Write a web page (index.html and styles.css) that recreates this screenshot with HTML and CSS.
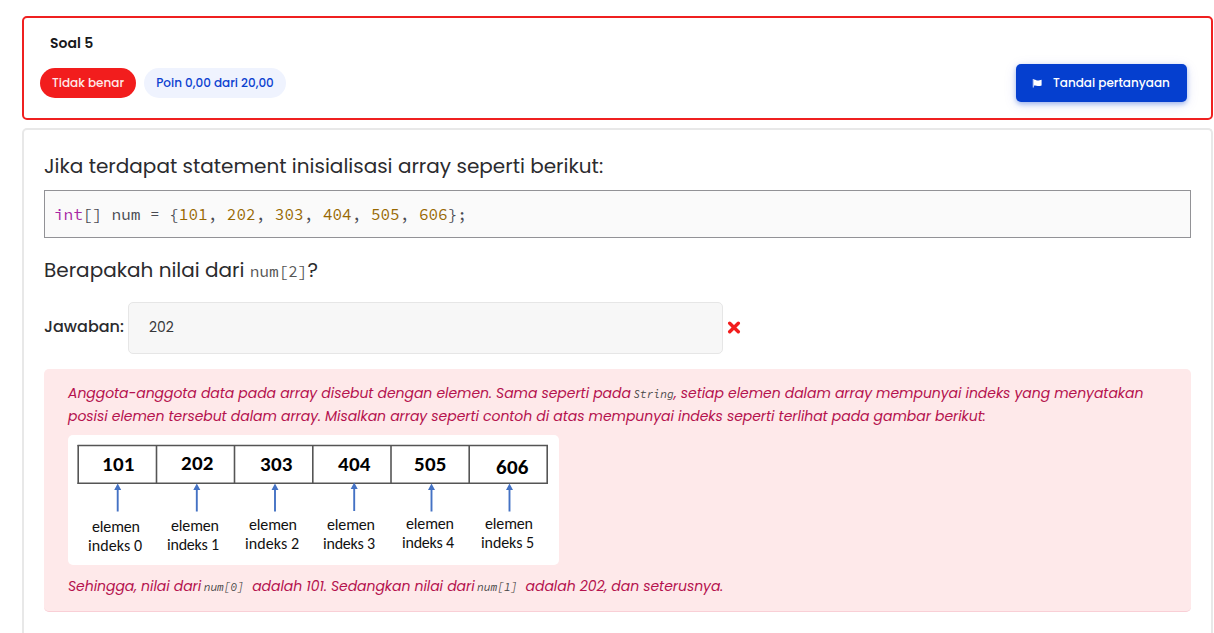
FILE: index.html
```html
<!DOCTYPE html>
<html lang="id">
<head>
<meta charset="utf-8">
<title>Soal 5</title>
<link rel="stylesheet" href="styles.css">
</head>
<body>
<main class="question">
  <header class="info">
    <h3 class="info-title">Soal 5</h3>
    <div class="info-row">
      <span class="badge badge-wrong">Tidak benar</span>
      <span class="badge badge-grade">Poin 0,00 dari 20,00</span>
      <button class="flag-button" type="button">
        <svg class="flag-icon" viewBox="0 0 10 10"><path d="M1.3 1V9.6" stroke="#fff" stroke-width="1.1" stroke-opacity=".8"/><path d="M1.8 1.5C3.2 1.2 4.3 2.5 5.8 2.5C7 2.5 8 2 9.6 1.7V7.5C8 8 7 8.2 5.8 8C4.3 7.8 3.2 7 1.8 7.8Z" fill="#fff"/></svg>
        <span class="flag-label">Tandai pertanyaan</span>
      </button>
    </div>
  </header>
  <section class="content">
    <p class="prompt">Jika terdapat statement inisialisasi array seperti berikut:</p>
    <pre class="code"><span class="kw">int</span>[] num = {<span class="num">101</span>, <span class="num">202</span>, <span class="num">303</span>, <span class="num">404</span>, <span class="num">505</span>, <span class="num">606</span>};</pre>
    <p class="prompt prompt-second">Berapakah nilai dari <code class="inline-code">num[2]</code>?</p>
    <div class="answer">
      <label class="answer-label" for="answer">Jawaban:</label>
      <input class="answer-input" id="answer" type="text" value="202" readonly>
      <svg class="cross" viewBox="0 0 14 14"><path d="M2.7 2.2L11.3 10.8M11.3 2.2L2.7 10.8" stroke="#f21d1d" stroke-width="3.4" stroke-linecap="round"/></svg>
    </div>
    <div class="feedback">
      <p class="feedback-text">Anggota-anggota data pada array disebut dengan elemen. Sama seperti pada<code class="small-code">String</code>, setiap elemen dalam array mempunyai indeks yang menyatakan<br>posisi elemen tersebut dalam array. Misalkan array seperti contoh di atas mempunyai indeks seperti terlihat pada gambar berikut:</p>
      <svg class="diagram" viewBox="68 435 491 130" width="491" height="130">
        <g fill="none" stroke="#555" stroke-width="1.6">
          <path d="M77.5 445.5H548M77.5 483.2H548"/>
          <path d="M78.2 445V484M156.5 445V484M234.5 445V484M312.8 445V484M391 445V484M469.2 445V484M547.2 445V484"/>
        </g>
        <g stroke="#4472c4" stroke-width="1.9">
          <path d="M117.7 489V511.5M196.8 489V511.5M275 489V511.5M354.2 488V511M431.5 489V511.5M509.5 489V511.5"/>
        </g>
        <g fill="#4472c4">
          <path d="M114.2 490L117.7 483.4L121.2 490ZM193.3 490L196.8 483.4L200.3 490ZM271.5 490L275 483.4L278.5 490ZM350.7 489L354.2 482.4L357.7 489ZM428 490L431.5 483.4L435 490ZM506 490L509.5 483.4L513 490Z"/>
        </g>
        <g class="cell">
          <text x="102" y="471" textLength="32.5">101</text>
          <text x="181" y="470" textLength="32.5">202</text>
          <text x="260" y="471" textLength="32.5">303</text>
          <text x="338" y="471" textLength="32.5">404</text>
          <text x="414" y="471" textLength="32.5">505</text>
          <text x="496" y="474" textLength="32.5">606</text>
        </g>
        <g class="caption">
          <text x="92" y="532" textLength="48">elemen</text><text x="88" y="551" textLength="54">indeks 0</text>
          <text x="171" y="531" textLength="48">elemen</text><text x="167" y="550" textLength="52">indeks 1</text>
          <text x="249" y="530" textLength="48">elemen</text><text x="245" y="549" textLength="54">indeks 2</text>
          <text x="327" y="530" textLength="48">elemen</text><text x="323" y="549" textLength="52">indeks 3</text>
          <text x="406" y="529" textLength="48">elemen</text><text x="402" y="548" textLength="52">indeks 4</text>
          <text x="485" y="529" textLength="48">elemen</text><text x="481" y="548" textLength="53">indeks 5</text>
        </g>
      </svg>
      <p class="feedback-text feedback-last">Sehingga, nilai dari<code class="small-code spaced">num[0]</code>adalah 101. Sedangkan nilai dari<code class="small-code spaced">num[1]</code>adalah 202, dan seterusnya.</p>
    </div>
  </section>
</main>
</body>
</html>
```
FILE: styles.css
```css
* { box-sizing: border-box; }
body {
  margin: 0;
  background: #fff;
  color: #2b2b2e;
  font-family: Poppins, Inter, sans-serif;
}
p, h3, pre { margin: 0; font-weight: 400; }
svg { flex: none; }
.question {
  display: flex;
  flex-direction: column;
  gap: 8px;
  height: 633px;
  overflow: hidden;
  padding: 16px 1px 0 22px;
}
.info {
  flex: none;
  height: 104px;
  padding: 16px 24px 0 16px;
  border: 2px solid #ef2020;
  border-radius: 5px;
}
.info-title {
  padding-left: 10px;
  font-size: 14px;
  font-weight: 600;
  line-height: 18px;
  color: #18181b;
}
.info-row {
  display: flex;
  align-items: center;
  gap: 8px;
  height: 38px;
  margin-top: 12px;
}
.badge {
  height: 30px;
  border-radius: 15px;
  font-size: 12px;
  font-weight: 500;
  line-height: 30px;
  text-align: center;
  white-space: nowrap;
}
.badge-wrong { width: 96px; background: #f21d1d; color: #ffe9e9; }
.badge-grade { width: 142px; background: #eff3fe; color: #0b41d0; }
.flag-button {
  display: flex;
  align-items: center;
  gap: 11px;
  width: 171px;
  height: 38px;
  margin-left: auto;
  padding: 0 0 0 16px;
  border: 0;
  border-radius: 5px;
  background: #053fcf;
  box-shadow: 0 2px 5px rgba(5, 63, 207, .35), 0 3px 14px rgba(5, 63, 207, .1);
  color: #fff;
  font: inherit;
}
.flag-icon { width: 10px; height: 10px; }
.flag-label { font-size: 12px; font-weight: 500; white-space: nowrap; }
.content {
  flex: 1;
  padding: 20px 20px 0;
  border: 2px solid #e8e8e8;
  border-bottom: 0;
  border-radius: 5px 5px 0 0;
}
.prompt { font-size: 20px; line-height: 32px; white-space: nowrap; }
.code {
  height: 48px;
  margin-top: 8px;
  padding-left: 9px;
  border: 1px solid #929296;
  background: #fafafa;
  color: #494a52;
  font-family: "Source Code Pro", "DejaVu Sans Mono", monospace;
  font-size: 16px;
  line-height: 47px;
}
.kw { color: #a626a4; }
.num { color: #986801; }
.prompt-second { height: 32px; margin-top: 16px; }
.inline-code {
  color: #555;
  font-family: "Source Code Pro", "DejaVu Sans Mono", monospace;
  font-size: 16px;
}
.answer { display: flex; align-items: center; height: 52px; margin-top: 16px; }
.answer-label { width: 84px; padding-bottom: 3px; font-size: 16px; font-weight: 500; white-space: nowrap; }
.answer-input {
  width: 595px;
  height: 52px;
  padding: 0 20px 2px;
  border: 1px solid #e6e6e6;
  border-radius: 5px;
  background: #f7f7f7;
  color: #37373a;
  font: inherit;
  font-size: 14px;
}
.cross { width: 14px; height: 14px; margin-left: 4px; }
.feedback {
  height: 243px;
  margin-top: 15px;
  padding: 13px 24px 0;
  border-bottom: 1px solid #f9cfd6;
  border-radius: 5px;
  background: #fee9ea;
}
.feedback-text {
  color: #b5124e;
  font-size: 14px;
  font-style: italic;
  line-height: 23px;
  letter-spacing: -.044px;
  white-space: nowrap;
}
.small-code {
  display: inline-block;
  width: 40.5px;
  margin-left: 2.5px;
  color: #444;
  font-family: "Source Code Pro", "DejaVu Sans Mono", monospace;
  font-size: 11.2px;
  line-height: 16px;
  letter-spacing: 0;
}
.spaced { margin-right: 8px; }
.diagram { display: block; margin-top: 7px; border-radius: 5px; background: #fff; }
.cell text { font: 700 21px Carlito, "Open Sans", sans-serif; fill: #000; }
.caption text { font: 400 16px Carlito, "Open Sans", sans-serif; fill: #111; }
.feedback-last { margin-top: 10px; }
```
